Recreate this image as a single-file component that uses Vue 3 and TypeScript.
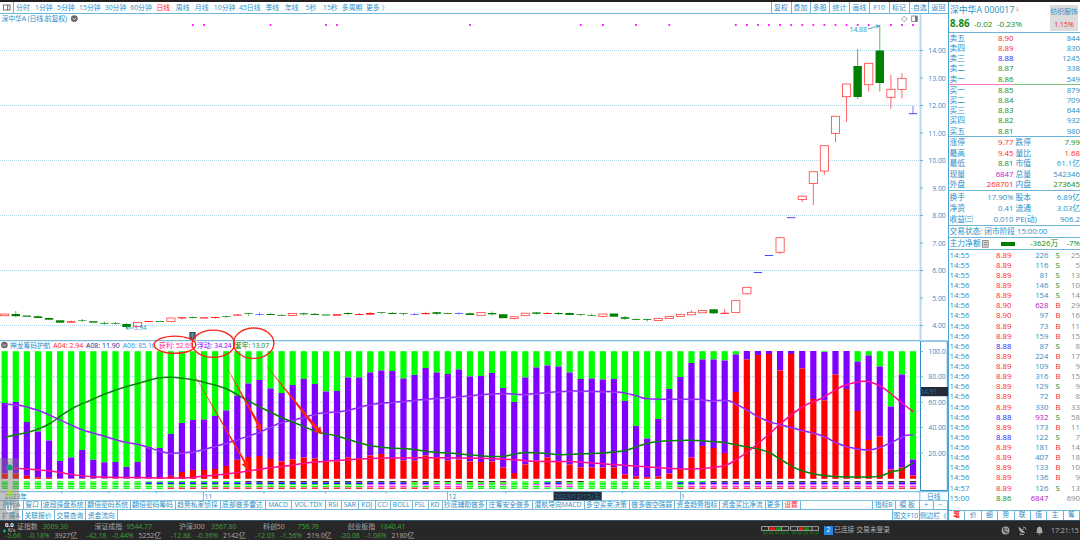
<script setup lang="ts">
type Item = [number, string, string?]
interface Cell { text: string; cls: string; width: number }

const STEP = 11.077
const cx = (i: number): number => 4.7 + i * STEP

function cells(items: Item[], end: number): Cell[] {
  return items.map((it, i) => ({
    text: it[1],
    cls: it[2] ?? '',
    width: (i + 1 < items.length ? items[i + 1][0] : end) - it[0],
  }))
}

const periods = cells([
  [16, '分时'], [35, '1分钟'], [57, '5分钟'], [79, '15分钟'], [104.7, '30分钟'], [130.2, '60分钟'],
  [156.5, '日线', 'red'], [175.8, '周线'], [194.8, '月线'], [213.8, '10分钟'], [239, '45日线'],
  [265.5, '季线'], [285, '年线'], [305.5, '5秒'], [323, '15秒'], [341.8, '多周期'], [366, '更多 〉'],
], 400)

const tools = cells([
  [770.5, '复权'], [790.5, '叠加'], [809.5, '多股'], [829, '统计'], [849, '画线'], [869, 'F10'],
  [888.5, '标记'], [908.5, '-自选'], [928, '返回'],
], 948)

const tabs = cells([
  [0, '指标A'], [23.5, '窗口'], [41.5, '波段操盘系统'], [86, '翻倍密码系统'], [130.5, '翻倍密码筹码'],
  [175.5, '趋势私家侦探'], [220.5, '底部做多雷达'], [265.5, 'MACD'], [291.5, 'VOL-TDX'], [326, 'RSI'],
  [341.5, 'SAR'], [359, 'KDJ'], [375.5, 'CCI'], [391, 'BOLL'], [412.5, 'FSL'], [428.5, 'KD'],
  [442.5, '抄底辅助做多'], [487, '庄筹安全做多'], [532.5, '潜航导向MACD'], [584.5, '多空买卖决策'],
  [629.5, '做多做空强弱'], [675, '资金趋势指标'], [720, '资金买比净流'], [765.5, '更多'], [782.5, '设置', 'red'],
], 800.5)

const tabsRight = cells([[872.5, '指标B'], [896, '模 板'], [919.5, '+'], [934, '−']], 948)
const tabs2 = cells([[0, '扩展A'], [22.5, '关联报价'], [54.5, '交易查询'], [86, '资金流向']], 117.5)
const tabs2Right = cells([[893, '图文F10'], [919.5, '侧边栏《']], 948)
const sideTabs = ['笔', '价', '细', '势', '联', '值', '主', '筹']

const indexTop = cells([
  [17, '证指数', 'w'], [42.5, '3069.30', 'g'], [94.5, '深证成指', 'w'], [126.5, '9544.77', 'g'],
  [179, '沪深300', 'w'], [211, '3567.80', 'g'], [263, '科创50', 'w'], [297.5, '756.76', 'g'],
  [347.5, '创业板指', 'w'], [380, '1840.41', 'g'],
], 440)
const indexBottom = cells([
  [5, '-5.66', 'g'], [28, '-0.18%', 'g'], [54.5, '3927亿', 'w'], [86.5, '-42.18', 'g'], [112, '-0.44%', 'g'],
  [138.5, '5252亿', 'w'], [171, '-12.88', 'g'], [196.5, '-0.36%', 'g'], [223, '2142亿', 'w'],
  [255, '-12.03', 'g'], [280.5, '-1.56%', 'g'], [307, '519.0亿', 'w'], [340, '-20.08', 'g'],
  [365, '-1.08%', 'g'], [391.5, '2180亿', 'w'],
], 440)

const asks: [string, string, string, string][] = [
  ['卖五', '8.90', 'red', '844'], ['卖四', '8.89', 'red', '830'], ['卖三', '8.88', 'blue', '1245'],
  ['卖二', '8.87', 'green', '338'], ['卖一', '8.86', 'green', '549'],
]
const bids: [string, string, string, string][] = [
  ['买一', '8.85', 'green', '879'], ['买二', '8.84', 'green', '709'], ['买三', '8.83', 'green', '644'],
  ['买四', '8.82', 'green', '932'], ['买五', '8.81', 'green', '980'],
]
type Stat = [string, string, string, string, string, string]
const stats: Stat[] = [
  ['涨停', '9.77', 'red', '跌停', '7.99', 'green'],
  ['最高', '9.45', 'red', '量比', '1.68', 'red'],
  ['最低', '8.81', 'green', '市值', '61.1亿', ''],
  ['现量', '6847', 'mag', '总量', '542346', ''],
  ['外盘', '268701', 'red', '内盘', '273645', 'green'],
]
const stats2: Stat[] = [
  ['换手', '17.90%', '', '股本', '6.89亿', ''],
  ['净资', '0.41', '', '流通', '3.03亿', ''],
  ['收益㈢', '0.010', '', 'PE(动)', '906.2', ''],
]

const ticks = `14:55 8.89 226 S 25|14:55 8.89 116 S 5|14:55 8.89 81 S 13|14:56 8.89 146 S 10|14:56 8.89 154 S 14
14:56 8.90 628 B 29|14:56 8.90 97 B 16|14:56 8.89 73 B 11|14:56 8.89 159 B 15|14:56 8.88 87 S 8
14:56 8.89 224 B 17|14:56 8.89 109 B 9|14:56 8.89 316 B 15|14:56 8.89 129 S 9|14:56 8.89 72 B 8
14:56 8.89 330 B 33|14:56 8.88 932 S 58|14:56 8.89 173 B 11|14:56 8.88 122 S 7|14:56 8.89 181 B 14
14:56 8.89 407 B 18|14:56 8.89 133 B 10|14:56 8.89 136 B 9|14:57 8.89 126 S 13|15:00 8.86 6847 - 690`
  .split(/[|\n]/)
  .map((row) => row.trim().split(' '))
const priceClass = (p: string): string => (p === '8.88' ? 'blue' : p === '8.86' ? 'green' : 'red')
const volClass = (v: string): string => (Number(v) > 500 ? 'mag' : '')

// [kind, bodyTop, bodyBottom, high?, low?]  r = hollow red, g = solid green, b = flat blue, f = flat red
type Candle = [string, number, number, number?, number?]
const candles: Candle[] = [
  ['r', 314, 315.7], ['g', 314, 316.2, 311, 317], ['g', 315.5, 316.7], ['g', 316.3, 318, 315.5], ['g', 318, 319.7, 317.5],
  ['g', 320.3, 322.7], ['f', 321.3, 322.6, 320.5], ['g', 320.4, 321, 319, 322], ['g', 321.2, 322.6], ['g', 322.9, 323.7, 321.8, 324.5],
  ['g', 323.2, 323.9, 322, 324.5], ['g', 324, 327, 323.3, 328.5], ['r', 322.3, 326.5], ['f', 321, 322], ['g', 321.2, 322],
  ['r', 318, 321.5], ['f', 317.2, 318.4, 317, 319.5], ['g', 317, 317.8, 316.4, 318.5], ['f', 317.3, 318.5], ['f', 317, 318, 316.5, 318.8],
  ['g', 316.2, 316.9, 315.8, 318], ['f', 314.5, 315.6, 314], ['g', 313.2, 313.9, 313, 316], ['b', 314.3, 315, 312.5, 315.5], ['g', 314, 315, 313],
  ['g', 315, 315.7, 314], ['r', 313.5, 315.5], ['g', 313.3, 314.3, 312.5, 315.5], ['g', 313.9, 315, 313], ['g', 314.5, 315.5],
  ['f', 314.2, 315.7], ['g', 313, 314, 312.2, 315.5], ['f', 314, 315, 313], ['f', 313, 314.7, 312], ['g', 312.3, 313, 312, 314],
  ['g', 313, 314, 312], ['g', 313.3, 314, 313, 315.5], ['b', 314.2, 314.9, 313, 315.3], ['f', 313, 314.2, 311.8], ['g', 312.2, 313.8, 312, 315],
  ['g', 313.2, 314, 312.8], ['b', 313.2, 314, 312.2, 314.5], ['g', 313.3, 315, 312.6], ['r', 312.6, 315.3], ['g', 313, 314.3, 311.5, 315.5],
  ['g', 314.2, 318.2], ['r', 316.8, 318.4, 316, 319.5], ['r', 313.2, 315.5], ['g', 312.4, 313.8, 312, 314.5], ['f', 313, 314, 312],
  ['g', 313, 314, 312, 315], ['g', 313, 314.9, 312.5], ['g', 314.3, 315, 314, 316], ['g', 315.1, 315.8, 313.5], ['r', 314, 316.3, 314, 317.5],
  ['g', 313.5, 316.7], ['g', 317.2, 318.8, 316, 320], ['g', 319, 319.8, 318.4], ['g', 319.2, 320, 319, 321.7], ['r', 318.5, 320.5, 317.8, 321],
  ['r', 316.5, 318.6], ['r', 314.3, 316.6], ['r', 312.3, 314.8, 310.5], ['r', 310.6, 312.8], ['g', 309.3, 313.3, 309.3, 314],
  ['f', 312.8, 313.9, 309], ['r', 300.7, 312.5], ['r', 287.3, 293.8, 287.3, 294.5], ['b', 272, 273], ['b', 255, 256],
  ['r', 237.7, 252.3, 237.7, 254], ['b', 217.2, 218.2], ['r', 196.2, 199.4, 195.5, 202], ['r', 171.7, 183.6, 171.7, 205], ['r', 145.7, 171, 145.7, 174.5],
  ['r', 116.3, 133.5, 116.3, 142], ['r', 84, 96.7, 84, 122], ['g', 66, 97, 49, 99], ['r', 63.3, 84.7, 63.3, 91.5], ['g', 50.5, 83, 25, 91.5],
  ['r', 89.3, 97.3, 75, 108.5], ['r', 78.3, 89.5, 73, 98.5], ['b', 113.2, 114.2, 106],
]

// purple segment tops, one per bar
const purpleTop = [
  403, 402, 422, 431.5, 440.5, 461, 457.5, 450, 459.8, 462.3, 462, 467, 462, 447, 448, 434, 423, 420, 419.5, 416,
  410.5, 395.5, 383.5, 380, 388.5, 393, 385, 379, 384, 391.5, 391, 377.5, 377.5, 372.5, 370.5, 371, 378.5, 375, 368, 372.5,
  374, 369.5, 376.5, 376, 373, 388, 402, 377.5, 367.5, 365.5, 366.5, 372.5, 379, 378.5, 379.5, 379, 401, 426, 438.5, 419,
  389, 377, 363, 359.5, 359.5, 360.5, 354.5, 351, 351, 351, 351, 351, 351, 351, 352, 351, 351, 361.5, 355.5, 366.5,
  406.5, 374.5, 459.5,
]
const redTop = [
  473.5, 473.5, 475.8, 477.3, 477.8, 478.5, 478.5, 478.5, 478.5, 478.5, 478.5, 478.5, 478.5, 478.5, 478, 475.8, 472, 470, 470, 469,
  466, 459.8, 457, 456, 459, 461.5, 459.5, 457.5, 458.5, 461.5, 461.5, 457.5, 458, 455.5, 454, 459, 460.5, 460.5, 455.5, 457.5,
  460.5, 459.5, 461.5, 462, 461.5, 467.5, 473, 464.5, 460.5, 457.5, 461, 464.5, 467.5, 467.5, 467.5, 467.5, 474.5, 476.5, 477.3, 476.5,
  473.5, 468.5, 457.5, 446, 448, 453, 392, 359.5, 355, 354, 370.5, 354, 368.5, 399, 400.5, 374.5, 389, 411, 440, 436.5,
  469.5, 467.5, 475.5,
]

const bars = purpleTop.map((p, i) => ({ x: cx(i) - 3.1, p, r: redTop[i] }))
const BASE = 478.8

// stacked signal strip: one letter per row
function strip(i: number): string {
  if (i < 13) return 'lgggg'
  if (i < 15) return 'lbggg'
  if (i < 22) return 'gbggr'
  if (i < 33) return 'kbggr'
  if (i < 37) return 'kbmmr'
  if (i === 37) return 'kgggr'
  if (i < 42) return i === 38 ? 'kbmgr' : 'kgmmr'
  if (i < 46) return i % 2 ? 'kgmgg' : 'kgggg'
  if (i === 49) return 'gbmmg'
  if (i === 50) return 'kbmmg'
  if (i === 51) return 'kgmmg'
  if (i === 52) return 'kgggg'
  if (i === 48) return 'ggmgg'
  if (i < 61) return 'lgggg'
  if (i === 61) return 'gbggr'
  if (i < 64) return 'gbmmr'
  return 'kbmmr'
}
const stripColor: Record<string, string> = {
  l: '#4dff4d', g: '#00f800', b: '#0000ff', m: '#ff2bff', r: '#f0202a', k: '#5a3410',
}
const stripY = [481, 482.4, 484.2, 485.9, 487.5]
const stripH = [1.1, 1.5, 1.1, 1.1, 1.4]
const strips = bars.flatMap((b, i) =>
  strip(i).split('').map((c, k) => ({ x: b.x, y: stripY[k], h: stripH[k], fill: stripColor[c] })),
)

type Pt = [number, number]
function smooth(pts: Pt[]): string {
  let d = `M${pts[0][0]} ${pts[0][1]}`
  for (let i = 0; i < pts.length - 1; i++) {
    const a = pts[Math.max(i - 1, 0)]
    const b = pts[i]
    const c = pts[i + 1]
    const e = pts[Math.min(i + 2, pts.length - 1)]
    const f = (n: number): string => n.toFixed(2)
    d += `C${f(b[0] + (c[0] - a[0]) / 6)} ${f(b[1] + (c[1] - a[1]) / 6)} ${f(c[0] - (e[0] - b[0]) / 6)} ${f(c[1] - (e[1] - b[1]) / 6)} ${c[0]} ${c[1]}`
  }
  return d
}
const purpleLine = smooth([
  [5, 404], [18, 405], [30, 408], [40, 411], [58, 419], [80, 429], [100, 435], [120, 441], [140, 445], [160, 451], [172, 453.3],
  [195, 451.5], [215, 446.5], [235, 440.5], [260, 432], [280, 423], [297, 419.3], [320, 413.3], [345, 411], [370, 404.7],
  [400, 401.7], [433, 398.7], [460, 396.7], [487, 394.3], [503, 393.5], [523, 394.5], [540, 393.3], [567, 391.2], [600, 391.5],
  [620, 392.3], [637, 396], [650, 399], [697, 399.3], [710, 400.7], [727, 400.3], [737, 404.7], [747, 410], [758, 416.7],
  [770, 422], [780, 424.5], [800, 430], [823, 436], [835, 442.3], [850, 447.5], [868, 450], [880, 447.3], [893, 441.7],
  [905, 435.5], [913.5, 435],
])
const greenLine = smooth([
  [5, 437], [25, 433], [37, 429.5], [50, 423.5], [62, 415], [75, 407], [90, 400.5], [105, 394], [125, 387], [145, 381.5],
  [158, 378], [172, 377.3], [190, 379.3], [205, 382.5], [225, 388.3], [245, 399], [265, 409.5], [285, 419], [300, 425],
  [317, 432], [335, 435.5], [350, 440], [370, 445.5], [390, 448], [410, 449], [430, 451.7], [460, 454], [490, 456.5],
  [505, 456], [523, 452.8], [540, 453], [560, 454.7], [580, 454], [600, 453.2], [625, 450.5], [637, 446.5], [650, 442.7],
  [665, 441], [690, 440.2], [710, 441.5], [727, 443], [747, 447], [760, 449.5], [770, 453], [785, 462], [800, 470],
  [820, 475], [840, 476.7], [870, 477], [880, 476], [893, 471.5], [902, 469.5], [913.5, 462.5],
])
const pinkLine = smooth([
  [5, 467.5], [20, 468.5], [50, 471], [75, 475], [100, 477], [150, 477.7], [180, 478], [205, 476], [235, 473], [265, 468.5],
  [290, 465.5], [310, 462.5], [345, 460], [370, 458.5], [395, 458], [420, 457.7], [440, 457.7], [480, 458.3], [510, 459.5],
  [540, 461.5], [570, 461.5], [600, 463.5], [620, 465], [660, 467.7], [690, 469], [710, 467.7], [725, 465.5], [738, 458.5],
  [750, 450], [770, 433.5], [780, 424], [803, 406.5], [820, 399], [834, 391], [843, 386], [855, 382.5], [867, 381.5],
  [880, 386], [890, 393], [902, 403], [913.5, 412],
])

const dots = [17, 18, 24, 29, 30, 42, 52, 54, 57, 60, 66, 67, 68, 69, 70, 71, 72, 73, 74, 75, 76, 77, 78, 80, 81, 82]
const axis = Array.from({ length: 11 }, (_, i) => ({ y: 50.5 + i * 27.5, label: `${14 - i}.00`, grid: i % 2 === 0 }))
const lowerAxis: [number, string][] = [[351.5, '100.0'], [376.8, '80.00'], [402.3, '60.00'], [427.5, '40.00'], [453, '20.00']]
const dateTicks = [62, 109, 156.5, 264, 325.5, 386, 506, 622.5]
const legend: [number, number, string, string][] = [
  [10, 40.5, '神龙筹码护航', '#2b8fc6'], [53.3, 30, 'A04: 2.94', '#ff1a1a'], [86, 33.7, 'A08: 11.90', '#201a90'],
  [122.7, 33, 'A06: 85.16', '#2c8df0'], [159, 34, '获利: 52.69', '#ff1493'], [197, 34.7, '浮动: 34.24', '#8000ff'],
  [235, 34, '套牢: 13.07', '#108010'],
]
</script>

<template>
  <div class="app">
    <div class="strip" />
    <div class="body">
      <div class="left">
        <div class="toolbar">
          <div class="panel-btn">
            <svg width="8" height="7" viewBox="0 0 8 7"><rect x=".5" y="1" width="6.5" height="5" fill="#fff" stroke="#555" stroke-width=".8" /><path d="M4.7 1v5" stroke="#555" stroke-width=".9" /></svg>
          </div>
          <span v-for="c in periods" :key="c.text" :class="c.cls" :style="{ width: c.width + 'px' }">{{ c.text }}</span>
          <div class="tools">
            <span v-for="c in tools" :key="c.text" class="tool" :style="{ width: c.width + 'px' }">{{ c.text }}</span>
          </div>
        </div>

        <svg class="chart" width="948" height="477" viewBox="0 14 948 477">
          <g stroke="#9fcfe6" stroke-width=".9" stroke-dasharray="1 1">
            <template v-for="a in axis" :key="a.y"><path v-if="a.grid" :d="`M0 ${a.y}H920`" /></template>
          </g>
          <g stroke="#9fcfe6" stroke-width=".9" stroke-dasharray="2 1.3">
            <path v-for="a in lowerAxis.slice(1)" :key="a[1]" :d="`M0 ${a[0]}H920`" />
          </g>
          <path d="M920.5 14V340" stroke="#b5d9ea" stroke-width="2" />
          <path d="M0 340.7H920" stroke="#5aacd6" stroke-width="1" />
          <path d="M920.5 490.5V341H947.3V490.5Z" fill="none" stroke="#2f90c8" stroke-width="1" />
          <g font-size="6.9" fill="#2b8fc6">
            <template v-for="a in axis" :key="a.label">
              <path :d="`M920 ${a.y}h3`" stroke="#4fa5d2" stroke-width=".8" />
              <text x="945.8" :y="a.y + 2.5" text-anchor="end">{{ a.label }}</text>
            </template>
            <template v-for="a in lowerAxis" :key="a[1]">
              <path :d="`M920 ${a[0]}h3`" stroke="#4fa5d2" stroke-width=".8" />
              <text x="945.8" :y="a[0] + 2.5" text-anchor="end">{{ a[1] }}</text>
            </template>
          </g>
          <rect x="921" y="387" width="27" height="9.2" fill="#252b36" />
          <text x="920" y="394.2" font-size="6.8" fill="#226d9e">64.91</text>

          <text x="1.5" y="21" font-size="7" fill="#2b8fc6" textLength="65.5">深中华A (日线.前复权)</text>
          <circle cx="74.3" cy="18.6" r="3.4" fill="#666" />
          <path d="M72.6 18l1.7 1.6L76 18" fill="none" stroke="#fff" stroke-width=".8" />

          <rect v-for="d in dots" :key="d" :x="cx(d) - 0.9" y="24.1" width="1.8" height="1.8" fill="#ff00ff" />

          <g v-for="(c, i) in candles" :key="i">
            <template v-if="c[0] === 'r'">
              <path v-if="c[3] && c[3] < c[1]" :d="`M${cx(i)} ${c[3]}V${c[1]}`" stroke="#ff3c3c" stroke-width=".8" />
              <path v-if="c[4]" :d="`M${cx(i)} ${c[2]}V${c[4]}`" stroke="#ff3c3c" stroke-width=".8" />
              <rect :x="cx(i) - 4.1" :y="c[1]" width="8.2" :height="c[2] - c[1]" fill="#fff" stroke="#ff3c3c" stroke-width=".8" />
            </template>
            <template v-else>
              <path
                v-if="c[3] || c[4]"
                :d="`M${cx(i)} ${c[3] ?? c[1]}V${c[4] ?? c[2]}`"
                :stroke="c[0] === 'g' ? '#3c983c' : c[0] === 'b' ? '#5c5cff' : '#ff3c3c'"
                stroke-width=".8"
              />
              <rect
                :x="cx(i) - 4.2" :y="c[1]" width="8.4" :height="c[2] - c[1]"
                :fill="c[0] === 'g' ? '#008000' : c[0] === 'b' ? '#4848ff' : '#ff2020'"
              />
            </template>
          </g>

          <text x="849.5" y="32" font-size="6.8" fill="#2b8fc6">14.88</text>
          <path d="M868 29l11-3.2M875.5 25l4 .8-3 2.6" fill="none" stroke="#2b8fc6" stroke-width=".8" />
          <path d="M904.3 16.1l2.8 2.8-2.8 2.8-2.8-2.8z" fill="none" stroke="#777" stroke-width=".7" />
          <rect x="911.7" y="16" width="5.8" height="5.4" fill="#fff" stroke="#777" stroke-width=".8" />
          <rect x="915" y="16" width="2" height="5.4" fill="#777" />
          <text x="134" y="330.4" font-size="6.4" fill="#2b8fc6">3.94</text>
          <path d="M134 328h-8M128.5 326.2l-2.5 1.8 2.5 1.8" fill="none" stroke="#2b8fc6" stroke-width=".8" />

          <circle cx="4.4" cy="345" r="3.3" fill="#666" />
          <path d="M2.7 344.4l1.7 1.6 1.7-1.6" fill="none" stroke="#fff" stroke-width=".8" />
          <text v-for="l in legend" :key="l[2]" :x="l[0]" y="347.6" :textLength="l[1]" lengthAdjust="spacingAndGlyphs" font-size="6.9" :fill="l[3]">{{ l[2] }}</text>
          <rect x="155" y="341.5" width="3.5" height="8" fill="#fff" />

          <g v-for="(b, i) in bars" :key="'b' + i">
            <rect v-if="b.p > 351.3" :x="b.x" y="351.2" width="6.2" :height="b.p - 351.2" fill="#00ff00" />
            <rect :x="b.x" :y="b.p" width="6.2" :height="b.r - b.p" fill="#8000ff" />
            <rect :x="b.x" :y="b.r" width="6.2" :height="BASE - b.r" fill="#ff0000" />
          </g>
          <rect v-for="(s, i) in strips" :key="'s' + i" :x="s.x" :y="s.y" width="6.2" :height="s.h" :fill="s.fill" />

          <g fill="none" stroke-width="1.5">
            <path :d="purpleLine" stroke="#8a18ff" />
            <path :d="purpleLine" stroke="#b98ae8" stroke-width=".4" transform="translate(0 .7)" />
            <path :d="greenLine" stroke="#0a800a" />
            <path :d="pinkLine" stroke="#ff0a90" />
          </g>

          <rect x="189.3" y="332" width="6.4" height="7.5" fill="#36516b" />
          <path d="M190.3 334h4M190.3 336h4M192.3 333v5.5" stroke="#8db2cc" stroke-width=".6" />

          <g fill="none" stroke="#f8281a" stroke-width="1.4">
            <ellipse cx="175" cy="344.7" rx="20.8" ry="8.6" />
            <ellipse cx="213.3" cy="343.7" rx="21.2" ry="13.6" />
            <ellipse cx="253.7" cy="343.2" rx="20.2" ry="15.2" />
          </g>
          <g fill="#ff2512">
            <path d="M187 362L244.1 463.1 241.7 464.4 248.8 470.6 248 461.2 245.9 462Z" />
            <path d="M223.8 362L257.5 425.7 255.4 426.8 261 431.5 261.3 423.8 259.9 424.3Z" />
            <path d="M263.5 362L315.8 430.2 314 431.5 322 434.2 320.3 426.2 318.1 427.9Z" />
          </g>
        </svg>

        <div class="dates">
          <svg width="948" height="10" viewBox="0 490.5 948 10">
            <path d="M0 491.2H948M0 500.2H948" stroke="#5aacd6" stroke-width=".9" />
            <path v-for="t in dateTicks" :key="t" :d="`M${t} 491v2`" stroke="#5aacd6" stroke-width=".8" />
            <path d="M203.4 491v9M447.5 491v9M680.5 491v9M919.8 491v9" stroke="#5aacd6" stroke-width=".8" />
            <rect x="553.5" y="491.3" width="48.2" height="8.6" fill="#252b36" />
            <g font-size="6.8" fill="#2b8fc6">
              <text x="4.8" y="498" fill="#1e7cb4">2023年</text><text x="204.5" y="498">11</text>
              <text x="448.5" y="498">12</text><text x="681" y="498">1</text>
              <text x="554.5" y="498" textLength="46" fill="#1f6c9c">2023/12/15/五</text>
              <text x="927" y="498">日线</text>
            </g>
          </svg>
        </div>
        <div class="tabs">
          <span v-for="c in tabs" :key="c.text" class="tab" :class="c.cls" :style="{ width: c.width + 'px' }">{{ c.text }}</span>
          <div class="tabs-right">
            <span v-for="c in tabsRight" :key="c.text" class="tab" :style="{ width: c.width + 'px' }">{{ c.text }}</span>
          </div>
        </div>
        <div class="tabs second">
          <span v-for="c in tabs2" :key="c.text" class="tab" :style="{ width: c.width + 'px' }">{{ c.text }}</span>
          <div class="tabs-right">
            <span v-for="c in tabs2Right" :key="c.text" class="tab" :style="{ width: c.width + 'px' }">{{ c.text }}</span>
          </div>
        </div>
      </div>

      <aside class="side">
        <header class="quote">
          <div class="quote-main">
            <div class="name">深中华A <span>000017</span><sup class="red">L</sup></div>
            <div class="price green"><b>8.86</b><span>-0.02</span><span>-0.23%</span></div>
          </div>
          <div class="sector"><span>纺织服饰</span><em class="red">1.15%</em></div>
        </header>
        <div class="book">
          <div v-for="a in asks" :key="a[0]" class="level"><span>{{ a[0] }}</span><span :class="a[2]">{{ a[1] }}</span><span>{{ a[3] }}</span></div>
        </div>
        <div class="split" />
        <div class="book">
          <div v-for="a in bids" :key="a[0]" class="level"><span>{{ a[0] }}</span><span :class="a[2]">{{ a[1] }}</span><span>{{ a[3] }}</span></div>
        </div>
        <div class="stats first">
          <div v-for="s in stats" :key="s[0]" class="stat"><span>{{ s[0] }}</span><span :class="s[2]">{{ s[1] }}</span><span>{{ s[3] }}</span><span :class="s[5]">{{ s[4] }}</span></div>
        </div>
        <div class="stats">
          <div v-for="s in stats2" :key="s[0]" class="stat"><span>{{ s[0] }}</span><span :class="s[2]">{{ s[1] }}</span><span>{{ s[3] }}</span><span :class="s[5]">{{ s[4] }}</span></div>
        </div>
        <div class="state">交易状态: 闭市阶段 15:00:00</div>
        <div class="flow">
          <span>主力净额</span>
          <svg width="7" height="8" viewBox="0 0 7 8"><rect x=".6" y=".6" width="5.6" height="6.6" fill="#ddd" stroke="#777" stroke-width=".8" /><path d="M1.8 2.7h3.2M1.8 4.8h3.2" stroke="#666" stroke-width=".8" /></svg>
          <i /><span class="green amount">-3626万</span><span class="green">-7%</span>
        </div>
        <div class="ticks">
          <div v-for="(t, i) in ticks" :key="i" class="tick">
            <span>{{ t[0] }}</span><span :class="priceClass(t[1])">{{ t[1] }}</span><span :class="volClass(t[2])">{{ t[2] }}</span>
            <span :class="t[3] === 'S' ? 'green' : 'red'">{{ t[3] === '-' ? '' : t[3] }}</span><span class="gray">{{ t[4] }}</span>
          </div>
        </div>
        <div class="side-tabs"><span v-for="(s, i) in sideTabs" :key="s" :class="{ on: i === 0 }">{{ s }}</span></div>
      </aside>
    </div>

    <footer class="status">
      <div class="indices">
        <div class="line top"><span v-for="c in indexTop" :key="c.text" :class="c.cls" :style="{ width: c.width + 'px' }">{{ c.text }}</span></div>
        <div class="line bottom"><span v-for="c in indexBottom" :key="c.text" :class="c.cls" :style="{ width: c.width + 'px' }">{{ c.text }}</span></div>
      </div>
      <svg class="meter" width="58" height="9" viewBox="0 0 58 9">
        <g fill="none" stroke="#aaa" stroke-width=".9">
          <path d="M.5.6h27.2v3.8H.5zM7.5.6v3.8M20.5.6v3.8M29.5.6h28v3.8h-28zM36.5.6v3.8M51 .6v3.8" />
        </g>
        <path d="M8.5 1.2h5.5v2.8H8.5zM38 1.2h4.5v2.8H38z" fill="#f01414" />
        <path d="M14.5 1.2h5.5v2.8h-5.5zM43.5 1.2h4.5v2.8h-4.5z" fill="#108a10" />
        <path d="M2 6h26M31 6h27M2 7.8h26M31 7.8h27" stroke="#1b6a1b" stroke-width="1" stroke-dasharray="4.5 1.3" />
      </svg>
      <span class="badge">2</span>
      <span class="conn">已连接 交易未登录</span>
      <div class="tray">
        <svg width="9" height="9" viewBox="0 0 9 9"><circle cx="4.5" cy="4.5" r="3.9" fill="#aaa" /><path d="M2.5 2.2C1.5 5 4 7.8 6.5 6.8L5.6 5.3 4.5 5.5 3.5 4 4.2 3.1 3.5 1.8zM5.3 2.2q1.6.4 1.5 2" fill="none" stroke="#272727" stroke-width=".8" /></svg>
        <svg width="9" height="9" viewBox="0 0 9 9"><path d="M.9 1C.2 4.2 3.3 7.6 7 7L4.9 5z" fill="#aaa" /><path d="M.9 1L7 7M4 4.2l1.8-1.6M5 1q3-.2 3 2.8M3 6.8L2 8.5h4" fill="none" stroke="#aaa" stroke-width=".9" /></svg>
        <svg width="9" height="9" viewBox="0 0 9 9"><path d="M4.5.6q2.6.5 2.6 3.5v1.8l1 1.2H.9l1-1.2V4.1Q1.9 1.1 4.5.6zM3.4 7.6h2.2v.9H3.4z" fill="#aaa" /></svg>
      </div>
      <span class="clock">17:21:15</span>
    </footer>

    <div class="widget">
      <svg width="20" height="82" viewBox="0 458 20 82">
        <path d="M0 458h16q3 0 3 3v59H0z" fill="#777" fill-opacity=".45" />
        <circle cx="9.6" cy="467.6" r="3" fill="#08a878" />
        <rect x="6.8" y="490" width="5.8" height="7" fill="#a8d838" fill-opacity=".75" />
        <path d="M6.5 505.5v4.5q3 3.5 6 0v-4.5M9.5 505v5" fill="none" stroke="#fff" stroke-opacity=".75" stroke-width="1.3" />
        <path d="M4.4 529l1.8 1.9-1.8 1.9-1.8-1.9z" fill="#12b07c" />
        <text x="5" y="526.5" font-size="6" font-weight="700" fill="#fff">0.0</text>
        <text x="8" y="532.4" font-size="5" fill="#ddd">K/s</text>
      </svg>
    </div>
  </div>
</template>

<style>
body { margin: 0; background: #fff; }
</style>

<style scoped>
.app {
  position: relative; width: 1080px; height: 540px; overflow: hidden; display: flex; flex-direction: column;
  font-family: "Open Sans", "Noto Sans", "Noto Sans CJK SC", sans-serif; font-size: 6.9px; line-height: 1;
  color: #2b8fc6; background: #fff; white-space: pre;
}
.app * { box-sizing: border-box; }
svg { display: block; flex: none; }
.red { color: #ff1c1c; }
.green { color: #158a15; }
.blue { color: #1c1cff; }
.mag { color: #b814c8; }
.gray { color: #8c8c8c; }
.strip { height: 2px; background: #231f20; flex: none; }
.body { display: flex; height: 518px; }
.left { width: 948px; height: 518px; flex: none; display: flex; flex-direction: column; }
.toolbar { height: 12px; flex: none; display: flex; align-items: center; border-bottom: 1px solid #6db5da; }
.toolbar > span { flex: none; padding-top: 1.2px; }
.panel-btn { width: 13.5px; height: 11px; padding: 2px 0 0 2.5px; border-right: 1px solid #6db5da; margin-right: 2.5px; }
.tools { margin-left: auto; display: flex; height: 11px; }
.tool { border-left: 1px solid #6db5da; display: flex; align-items: center; justify-content: center; padding-top: 1.2px; }
.chart { height: 477px; }
.dates { height: 9.5px; flex: none; }
.tabs { height: 9.9px; flex: none; display: flex; border-bottom: .9px solid #6db5da; font-size: 6.8px; }
.tab { flex: none; display: flex; align-items: center; justify-content: center; border-right: 1px solid #6db5da; padding-top: 1.6px; }
.tabs-right { margin-left: auto; display: flex; border-left: 1px solid #6db5da; }
.second { height: 9.6px; border-bottom: 0; }

.side { width: 132px; height: 518px; border-left: 1px solid #4aa3d2; display: flex; flex-direction: column; font-size: 7.8px; }
.quote { height: 31px; flex: none; display: flex; justify-content: space-between; border-bottom: 1px solid #6db5da; }
.name { font-size: 8.8px; padding: 3.5px 0 0 1px; height: 16.5px; }
.name sup { font-size: 4.5px; vertical-align: 2px; margin-left: 2px; }
.price { display: flex; align-items: baseline; padding-left: 1px; }
.price b { font-size: 9.8px; width: 24px; }
.price span { width: 23px; font-size: 8px; }
.sector { width: 28px; height: 26px; margin: 2.5px 2px 0 0; background: #dcdcdc; display: flex; flex-direction: column; align-items: center; }
.sector span { font-size: 6.8px; margin-top: 4px; }
.sector em { font-style: normal; font-size: 7px; margin-top: 6px; }
.book { height: 51px; flex: none; display: flex; flex-direction: column; }
.level { flex: 1; display: grid; grid-template-columns: 30px 34px 1fr; align-items: center; padding: 1px 0 0 .5px; }
.level span:nth-child(n + 2) { text-align: right; }
.split { height: 1px; flex: none; background: linear-gradient(90deg, #ff7cc0 50%, #7cc07c 50%); }
.stats { height: 35px; flex: none; display: flex; flex-direction: column; border-bottom: 1px solid #6db5da; padding-top: 1px; }
.stats.first { height: 55px; border-top: 1px solid #6db5da; }
.stat { flex: 1; display: grid; grid-template-columns: 23px 41px 25px 1fr; align-items: center; padding-left: .5px; }
.stat span:nth-child(even) { text-align: right; }
.stat span:nth-child(3) { padding-left: 2px; }
.state { height: 11.5px; flex: none; display: flex; align-items: center; padding: 1px 0 0 .5px; border-bottom: 1px solid #6db5da; font-size: 7.7px; }
.flow { height: 12.5px; flex: none; display: flex; align-items: center; padding: .5px 0 0 .5px; border-bottom: 1px solid #6db5da; }
.flow svg { margin-left: 1.5px; }
.flow i { width: 14px; height: 4px; background: #008000; margin-left: 12px; }
.flow .amount { margin-left: auto; width: 36.5px; }
.ticks { height: 253.2px; margin-top: .5px; flex: none; display: flex; flex-direction: column; }
.tick { flex: 1; display: grid; grid-template-columns: 28px 34px 37px 15px 1fr; align-items: center; padding-left: .5px; }
.tick span:nth-child(2), .tick span:nth-child(3), .tick span:nth-child(5) { text-align: right; }
.tick span:nth-child(4) { padding-left: 7px; }
.side-tabs { margin-top: auto; height: 10px; flex: none; display: flex; border-top: 1px solid #6db5da; font-size: 6.8px; }
.side-tabs span { flex: 1; display: flex; align-items: center; justify-content: center; border-right: 1px solid #6db5da; }
.side-tabs .on { color: #ff1c1c; font-weight: 700; }

.status { height: 20px; flex: none; background: #272727; border-top: 1px solid #31536a; display: flex; align-items: center; color: #b0b0b0; }
.indices { width: 761px; height: 19px; }
.line { display: flex; height: 8.8px; align-items: center; }
.line span { flex: none; }
.top { padding: 2.6px 0 0 17px; height: 10.4px; }
.bottom { padding: .6px 0 0 5px; }
.g { color: #3fa03a; }
.w { color: #a8a8a8; }
.badge { width: 8.5px; height: 8.5px; margin-left: 5px; background: #2687e0; color: #fff; display: flex; align-items: center; justify-content: center; font-size: 6.5px; }
.conn { margin-left: 1.5px; font-size: 6.8px; }
.tray { display: flex; gap: 8px; margin-left: auto; }
.clock { width: 28px; margin: 0 1px 0 7px; font-size: 7px; }
.widget { position: absolute; left: 0; top: 458px; }
</style>
